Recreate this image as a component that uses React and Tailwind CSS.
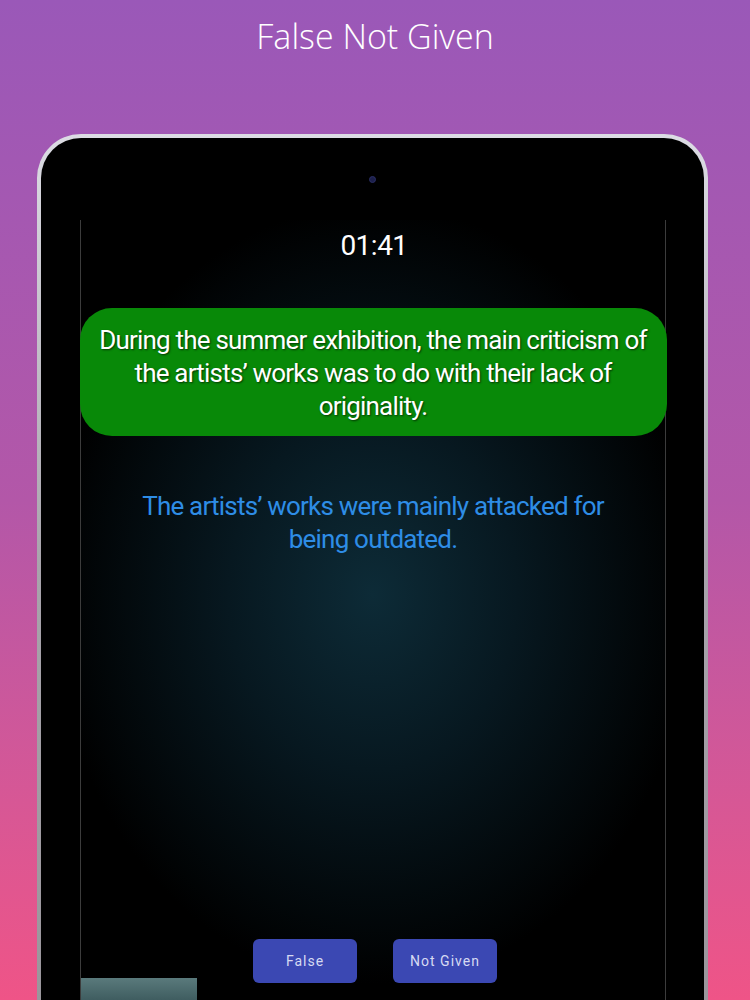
export default function App() {
  return (
    <div className="w-[750px] h-[1000px] overflow-hidden flex flex-col items-center bg-gradient-to-b from-[#9a58b8] via-[#b357a8] to-[#ef5487]">
      <h1 className="mt-[14px] text-[34px] leading-[44px] font-light text-white" style={{ fontFamily: '"Open Sans", sans-serif' }}>
        False Not Given
      </h1>

      {/* tablet frame */}
      <div className="mt-[76px] self-start ml-[37px] w-[671px] flex-1 flex flex-col rounded-t-[44px] pt-[4px] px-[4px] bg-gradient-to-b from-[#dcdce4] via-[#a8a4ac] to-[#9a969c]">
        <div className="flex-1 flex flex-col rounded-t-[40px] bg-black">
          <div className="mt-[38px] self-center w-[7px] h-[7px] rounded-full bg-[#1c1f4a] border border-[#2b2f66]" />

          {/* screen */}
          <div
            className="relative mt-[37px] ml-[39px] mr-[38px] flex-1 flex flex-col items-center border-x border-[#3c3c3c] bg-[radial-gradient(ellipse_55%_50%_at_50%_48%,#0d2b37_0%,#071820_45%,#000000_100%)]"
            style={{ fontFamily: 'Roboto, "Liberation Sans", sans-serif' }}
          >
            <div className="mt-[10px] ml-[2px] text-[28px] leading-[32px] text-white tracking-[-0.5px]">01:41</div>

            <div className="mt-[46px] w-[587px] -mx-px h-[128px] rounded-[32px] bg-[#088908] flex items-center justify-center px-[16px]">
              <p className="mt-[2px] text-center text-[26px] leading-[33px] text-white tracking-[-0.8px] [text-shadow:1px_1px_2px_rgba(0,0,0,0.6)]">
                During the summer exhibition, the main criticism of the artists’ works was to do with their lack of originality.
              </p>
            </div>

            <p className="mt-[54px] w-[480px] text-center text-[26px] leading-[33px] text-[#2e8de6] tracking-[-0.8px]">
              The artists’ works were mainly attacked for being outdated.
            </p>

            <div className="mt-auto mb-[17px] ml-[4px] flex gap-[36px]">
              <button className="w-[104px] h-[44px] rounded-[6px] bg-[#3b48b3] text-[14px] tracking-[1px] text-[#d6daf2]">
                False
              </button>
              <button className="w-[104px] h-[44px] rounded-[6px] bg-[#3b48b3] text-[14px] tracking-[1px] text-[#d6daf2]">
                Not Given
              </button>
            </div>

            <div className="absolute left-0 bottom-0 w-[116px] h-[22px] bg-gradient-to-b from-[#5a7a7c] to-[#3f5d60]" />
          </div>
        </div>
      </div>
    </div>
  );
}
